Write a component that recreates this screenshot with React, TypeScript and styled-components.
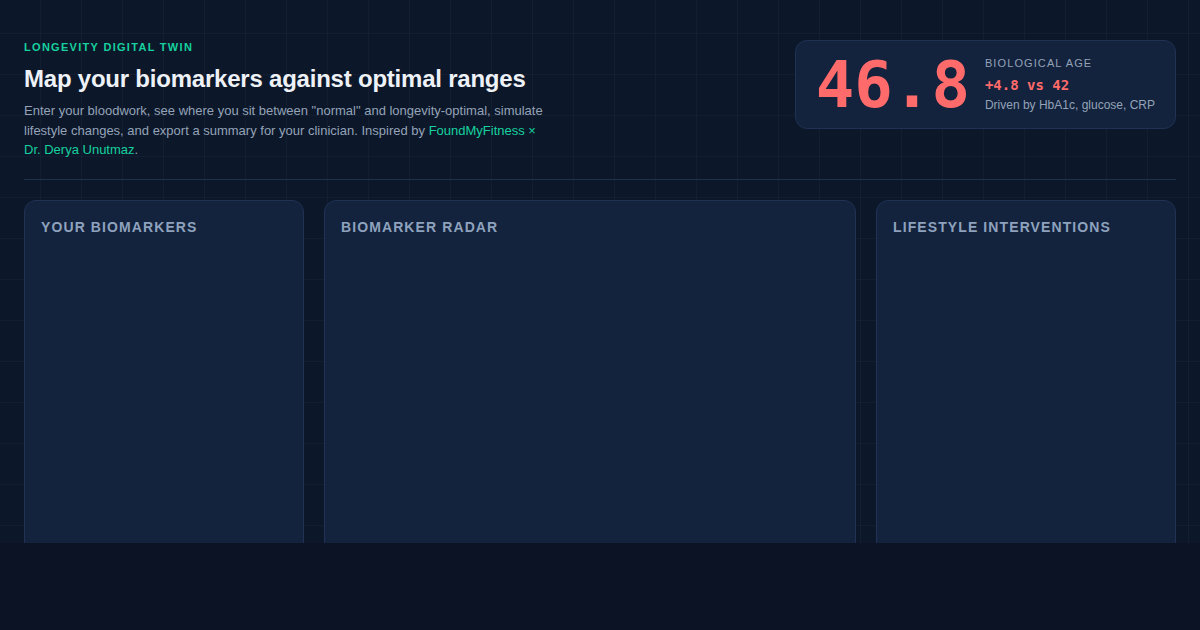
import { createGlobalStyle } from "styled-components";
import styled from "styled-components";

const color = {
  page: "#0b1325",
  canvas: "#0c1729",
  gridLine: "rgba(148, 163, 184, 0.05)",
  panel: "#13223d",
  panelBorder: "#1f3254",
  divider: "#1f2f4d",
  text: "#eef2f7",
  muted: "#94a3b8",
  label: "#8ea2bd",
  accent: "#16d19f",
  alert: "#ff6b6b",
};

const GlobalStyle = createGlobalStyle`
  html, body {
    margin: 0;
    padding: 0;
    background: ${color.page};
    font-family: "Liberation Sans", Arial, sans-serif;
    color: ${color.text};
  }
`;

// the app frame: a faint 41px grid behind everything above the fold
const Shell = styled.div`
  height: 543px;
  overflow: hidden;
  padding: 40px 24px 0;
  box-sizing: border-box;
  background-color: ${color.canvas};
  background-image: linear-gradient(
      to right,
      ${color.gridLine} 1px,
      transparent 1px
    ),
    linear-gradient(to bottom, ${color.gridLine} 1px, transparent 1px);
  background-size: 41px 41px;
  background-position: 40px 33px;
`;

const Header = styled.header`
  display: flex;
  justify-content: space-between;
  align-items: flex-start;
  padding-bottom: 19px;
  border-bottom: 1px solid ${color.divider};
`;

const Intro = styled.div`
  max-width: 560px;
`;

const Eyebrow = styled.div`
  font-size: 11px;
  font-weight: 700;
  letter-spacing: 1.3px;
  color: ${color.accent};
  text-transform: uppercase;
  line-height: 14px;
`;

const Title = styled.h1`
  margin: 10px 0 7px;
  font-size: 24px;
  line-height: 30px;
  font-weight: 700;
  letter-spacing: -0.22px;
  color: ${color.text};
`;

const Lead = styled.p`
  margin: 0;
  max-width: 524px;
  font-size: 13px;
  line-height: 19.5px;
  color: ${color.muted};
`;

const Link = styled.a`
  color: ${color.accent};
  text-decoration: none;
`;

const AgeCard = styled.div`
  display: flex;
  align-items: center;
  gap: 15px;
  padding: 0 20px;
  height: 89px;
  box-sizing: border-box;
  background: ${color.panel};
  border: 1px solid ${color.panelBorder};
  border-radius: 12px;
  white-space: nowrap;
`;

const AgeValue = styled.div`
  font-family: "DejaVu Sans Mono", monospace;
  font-size: 64px;
  font-weight: 700;
  line-height: 1;
  color: ${color.alert};
`;

const AgeMeta = styled.div`
  display: flex;
  flex-direction: column;
`;

const AgeLabel = styled.div`
  font-size: 11px;
  letter-spacing: 1.1px;
  text-transform: uppercase;
  color: ${color.muted};
  line-height: 14px;
`;

const AgeDelta = styled.div`
  margin-top: 6px;
  font-family: "DejaVu Sans Mono", monospace;
  font-size: 14px;
  font-weight: 700;
  color: ${color.alert};
  line-height: 18px;
`;

const AgeDrivers = styled.div`
  margin-top: 3px;
  font-size: 12px;
  color: ${color.muted};
  line-height: 16px;
`;

const Board = styled.main`
  display: grid;
  grid-template-columns: 280px 1fr 300px;
  gap: 20px;
  margin-top: 20px;
`;

const Panel = styled.section`
  min-height: 480px;
  padding: 17px 16px;
  background: ${color.panel};
  border: 1px solid ${color.panelBorder};
  border-radius: 12px;
`;

const PanelTitle = styled.h2`
  margin: 0;
  font-size: 14px;
  font-weight: 700;
  letter-spacing: 1.1px;
  text-transform: uppercase;
  color: ${color.label};
  line-height: 18px;
`;

export default function App() {
  return (
    <>
      <GlobalStyle />
      <Shell>
        <Header>
          <Intro>
            <Eyebrow>Longevity Digital Twin</Eyebrow>
            <Title>Map your biomarkers against optimal ranges</Title>
            <Lead>
              Enter your bloodwork, see where you sit between "normal" and
              longevity-optimal, simulate lifestyle changes, and export a
              summary for your clinician. Inspired by{" "}
              <Link href="#">FoundMyFitness × Dr. Derya Unutmaz</Link>.
            </Lead>
          </Intro>
          <AgeCard>
            <AgeValue>46.8</AgeValue>
            <AgeMeta>
              <AgeLabel>Biological age</AgeLabel>
              <AgeDelta>+4.8 vs 42</AgeDelta>
              <AgeDrivers>Driven by HbA1c, glucose, CRP</AgeDrivers>
            </AgeMeta>
          </AgeCard>
        </Header>
        <Board>
          <Panel>
            <PanelTitle>Your Biomarkers</PanelTitle>
          </Panel>
          <Panel>
            <PanelTitle>Biomarker Radar</PanelTitle>
          </Panel>
          <Panel>
            <PanelTitle>Lifestyle Interventions</PanelTitle>
          </Panel>
        </Board>
      </Shell>
    </>
  );
}
